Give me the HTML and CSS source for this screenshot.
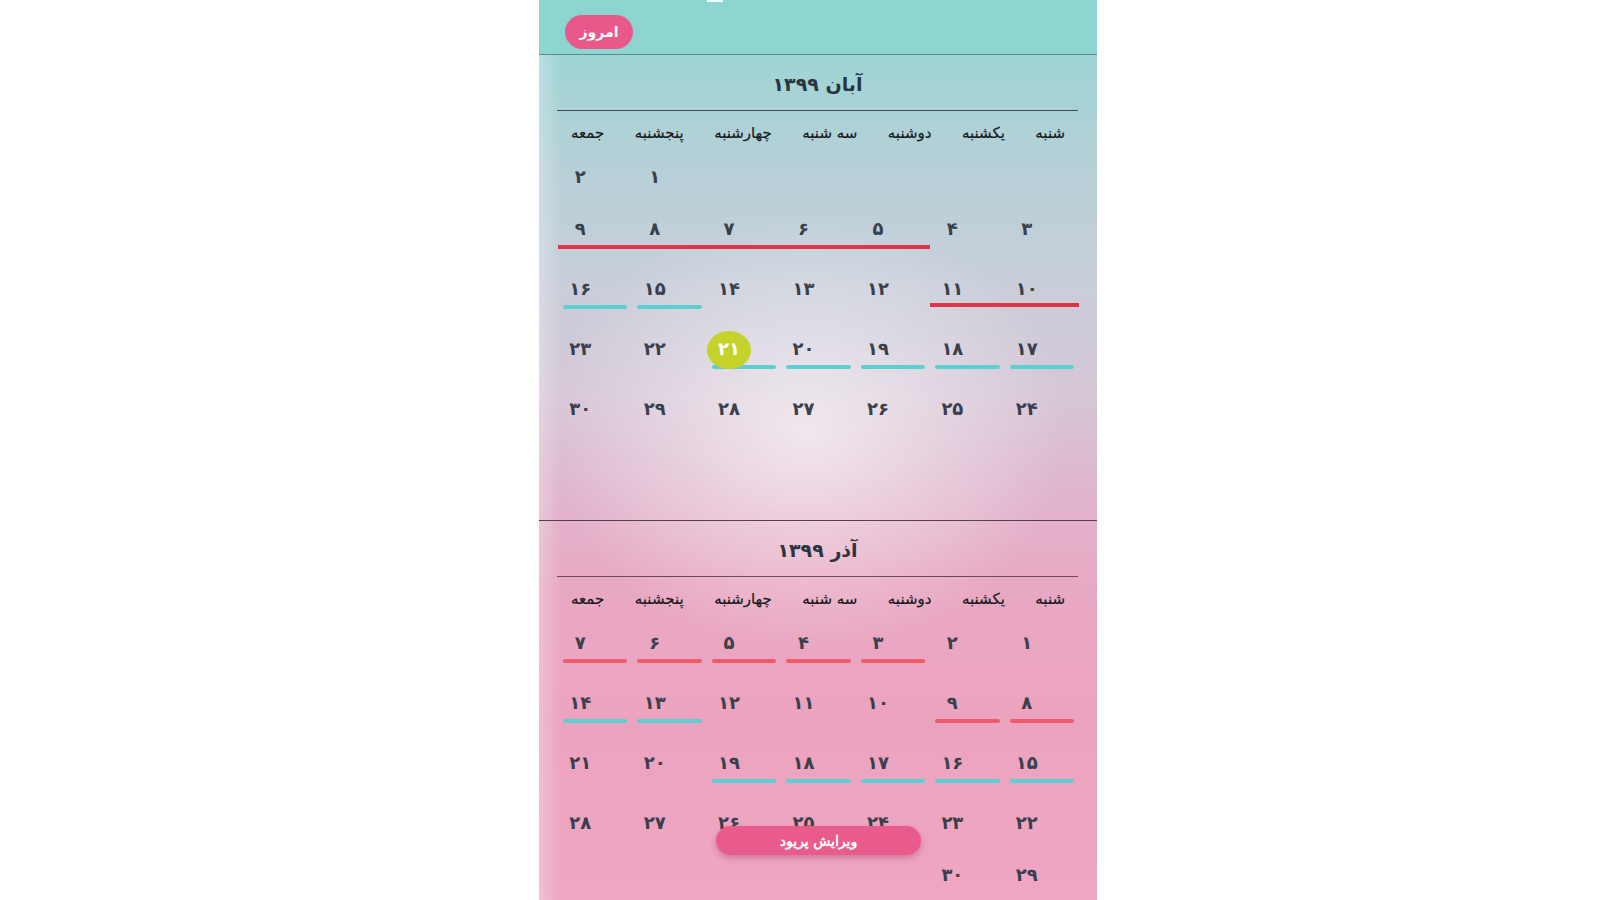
FILE: index.html
```html
<!DOCTYPE html>
<html lang="fa">
<head>
<meta charset="utf-8">
<title>تقویم</title>
<link rel="stylesheet" href="styles.css">
</head>
<body>
<div class="phone">
  <div class="notch"></div>
  <header class="topbar">
    <button class="today">امروز</button>
  </header>

  <section class="month month-aban">
    <h2 class="month-title">آبان ۱۳۹۹</h2>
    <div class="weekdays">
      <span>شنبه</span><span>یکشنبه</span><span>دوشنبه</span><span>سه شنبه</span><span>چهارشنبه</span><span>پنجشنبه</span><span>جمعه</span>
    </div>
    <div class="days">
      <div class="cell"></div><div class="cell"></div><div class="cell"></div><div class="cell"></div><div class="cell"></div>
      <div class="cell"><span class="num">۱</span></div>
      <div class="cell"><span class="num">۲</span></div>

      <div class="cell"><span class="num">۳</span></div>
      <div class="cell"><span class="num">۴</span></div>
      <div class="cell"><span class="num">۵</span><i class="bar red-band"></i></div>
      <div class="cell"><span class="num">۶</span><i class="bar red-band"></i></div>
      <div class="cell"><span class="num">۷</span><i class="bar red-band"></i></div>
      <div class="cell"><span class="num">۸</span><i class="bar red-band"></i></div>
      <div class="cell"><span class="num">۹</span><i class="bar red-band"></i></div>

      <div class="cell"><span class="num">۱۰</span><i class="bar red-band low"></i></div>
      <div class="cell"><span class="num">۱۱</span><i class="bar red-band low"></i></div>
      <div class="cell"><span class="num">۱۲</span></div>
      <div class="cell"><span class="num">۱۳</span></div>
      <div class="cell"><span class="num">۱۴</span></div>
      <div class="cell"><span class="num">۱۵</span><i class="bar cyan"></i></div>
      <div class="cell"><span class="num">۱۶</span><i class="bar cyan"></i></div>

      <div class="cell"><span class="num">۱۷</span><i class="bar cyan"></i></div>
      <div class="cell"><span class="num">۱۸</span><i class="bar cyan"></i></div>
      <div class="cell"><span class="num">۱۹</span><i class="bar cyan"></i></div>
      <div class="cell"><span class="num">۲۰</span><i class="bar cyan"></i></div>
      <div class="cell"><span class="num today-num">۲۱</span><i class="bar cyan"></i></div>
      <div class="cell"><span class="num">۲۲</span></div>
      <div class="cell"><span class="num">۲۳</span></div>

      <div class="cell"><span class="num">۲۴</span></div>
      <div class="cell"><span class="num">۲۵</span></div>
      <div class="cell"><span class="num">۲۶</span></div>
      <div class="cell"><span class="num">۲۷</span></div>
      <div class="cell"><span class="num">۲۸</span></div>
      <div class="cell"><span class="num">۲۹</span></div>
      <div class="cell"><span class="num">۳۰</span></div>
    </div>
  </section>

  <section class="month month-azar">
    <h2 class="month-title">آذر ۱۳۹۹</h2>
    <div class="weekdays">
      <span>شنبه</span><span>یکشنبه</span><span>دوشنبه</span><span>سه شنبه</span><span>چهارشنبه</span><span>پنجشنبه</span><span>جمعه</span>
    </div>
    <div class="days">
      <div class="cell"><span class="num">۱</span></div>
      <div class="cell"><span class="num">۲</span></div>
      <div class="cell"><span class="num">۳</span><i class="bar salmon"></i></div>
      <div class="cell"><span class="num">۴</span><i class="bar salmon"></i></div>
      <div class="cell"><span class="num">۵</span><i class="bar salmon"></i></div>
      <div class="cell"><span class="num">۶</span><i class="bar salmon"></i></div>
      <div class="cell"><span class="num">۷</span><i class="bar salmon"></i></div>

      <div class="cell"><span class="num">۸</span><i class="bar salmon"></i></div>
      <div class="cell"><span class="num">۹</span><i class="bar salmon"></i></div>
      <div class="cell"><span class="num">۱۰</span></div>
      <div class="cell"><span class="num">۱۱</span></div>
      <div class="cell"><span class="num">۱۲</span></div>
      <div class="cell"><span class="num">۱۳</span><i class="bar cyan"></i></div>
      <div class="cell"><span class="num">۱۴</span><i class="bar cyan"></i></div>

      <div class="cell"><span class="num">۱۵</span><i class="bar cyan"></i></div>
      <div class="cell"><span class="num">۱۶</span><i class="bar cyan"></i></div>
      <div class="cell"><span class="num">۱۷</span><i class="bar cyan"></i></div>
      <div class="cell"><span class="num">۱۸</span><i class="bar cyan"></i></div>
      <div class="cell"><span class="num">۱۹</span><i class="bar cyan"></i></div>
      <div class="cell"><span class="num">۲۰</span></div>
      <div class="cell"><span class="num">۲۱</span></div>

      <div class="cell"><span class="num">۲۲</span></div>
      <div class="cell"><span class="num">۲۳</span></div>
      <div class="cell"><span class="num">۲۴</span></div>
      <div class="cell"><span class="num">۲۵</span></div>
      <div class="cell"><span class="num">۲۶</span></div>
      <div class="cell"><span class="num">۲۷</span></div>
      <div class="cell"><span class="num">۲۸</span></div>

      <div class="cell"><span class="num">۲۹</span></div>
      <div class="cell"><span class="num">۳۰</span></div>
    </div>
  </section>

  <button class="edit-period">ویرایش پریود</button>
</div>
</body>
</html>
```

FILE: styles.css
```css
* { box-sizing: border-box; }

html, body {
  margin: 0;
  padding: 0;
  background: #ffffff;
  height: 100%;
  overflow: hidden;
}

body {
  font-family: "DejaVu Sans", "Noto Sans", sans-serif;
}

.phone {
  position: relative;
  width: 558px;
  height: 900px;
  margin-left: 539px;
  overflow: hidden;
  direction: rtl;
  background:
    linear-gradient(90deg, rgba(255,255,255,0.28) 0, rgba(255,255,255,0) 22px),
    radial-gradient(ellipse 260px 220px at 48% 48%, rgba(255,255,255,0.62), rgba(255,255,255,0) 100%),
    linear-gradient(180deg, #8fd6d1 0%, #a2d3d5 8%, #b9d0d8 20%, #c9ced9 32%, #d6c6d6 44%, #e0b5cc 55%, #e8a8c3 65%, #eca3c0 80%, #eea6c2 100%);
}

.notch {
  position: absolute;
  top: 0;
  left: 168px;
  width: 16px;
  height: 2px;
  background: #f4ffff;
}

.topbar {
  height: 55px;
  padding: 15px 26px 0 0;
  background: #8dd5d0;
  border-bottom: 1px solid #5d8a8c;
  display: flex;
  direction: ltr;
}

.today {
  margin-left: 26px;
  width: 68px;
  height: 34px;
  border: none;
  border-radius: 17px;
  background: #e9588b;
  color: #ffffff;
  font-family: "DejaVu Sans", sans-serif;
  font-weight: bold;
  font-size: 14px;
  padding: 0;
}

.month-azar {
  border-top: 1px solid #5a3e4c;
}

.month-aban {
  padding-bottom: 85px;
}

.month-title {
  margin: 0 19px 0 18px;
  height: 56px;
  line-height: 58px;
  text-align: center;
  font-size: 19px;
  font-weight: bold;
  color: #2a3540;
  border-bottom: 1px solid #3d4a52;
}

.month-azar .month-title {
  border-bottom-color: #6a4a5a;
}

.weekdays {
  display: flex;
  justify-content: space-between;
  padding: 0 32px;
  margin-top: 7px;
  height: 30px;
  line-height: 30px;
  font-size: 15px;
  color: #15181c;
  -webkit-text-stroke: 0.2px #15181c;
}

.days {
  display: grid;
  grid-template-columns: repeat(7, 1fr);
  align-items: start;
  padding: 0 18px 0 19px;
  margin-top: 3px;
}

.cell {
  display: flex;
  flex-direction: column;
  align-items: stretch;
  padding: 12px 0;
}

.num {
  display: block;
  height: 28px;
  line-height: 28px;
  text-align: center;
  padding-right: 30px;
  font-size: 18px;
  font-weight: bold;
  color: #3a3f4c;
}

.today-num {
  position: relative;
  z-index: 0;
  color: #ffffff;
}

.today-num::before {
  content: "";
  position: absolute;
  z-index: -1;
  top: -4px;
  width: 44px;
  height: 38px;
  border-radius: 50%;
  background: #c5d22c;
  left: calc(50% - 15px - 22px);
}

.bar {
  display: block;
  height: 4px;
  margin: 2px 5px;
  border-radius: 2px;
}

.cyan { background: #5dcfd0; }
.salmon { background: #ef5b6a; }

.red-band {
  background: #e03448;
  margin: 2px 0;
  border-radius: 0;
}

.red-band.low { margin-top: 0; margin-bottom: 4px; }

.edit-period {
  position: absolute;
  left: 177px;
  bottom: 45px;
  width: 205px;
  height: 29px;
  border: none;
  border-radius: 15px;
  background: #e95b8c;
  color: #ffffff;
  font-family: "DejaVu Sans", sans-serif;
  font-weight: normal;
  -webkit-text-stroke: 0.5px #ffffff;
  font-size: 14px;
  padding: 0;
  box-shadow: 0 3px 6px rgba(150, 40, 80, 0.35);
}
```
